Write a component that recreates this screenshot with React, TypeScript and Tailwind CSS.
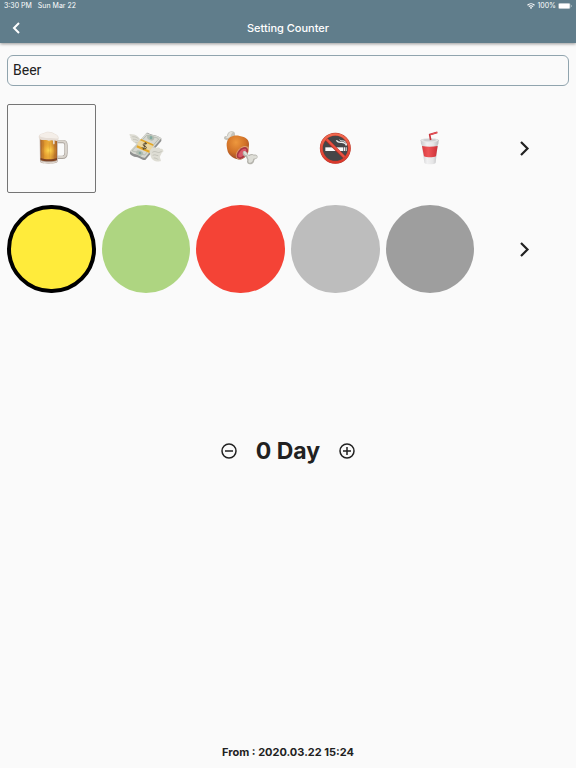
import { useState } from "react";
import type { ReactNode } from "react";

const BeerIcon = () => (
  <svg viewBox="-1 2 132 132" className="size-11" aria-hidden="true">
    <defs>
      <linearGradient id="beer" x1="0" x2="1">
        <stop offset="0" stopColor="#a9622a" />
        <stop offset=".25" stopColor="#df982f" />
        <stop offset=".55" stopColor="#eeb13d" />
        <stop offset="1" stopColor="#a86228" />
      </linearGradient>
      <radialGradient id="glow" cy=".55">
        <stop offset="0" stopColor="#ffdf55" />
        <stop offset="1" stopColor="#f0a52e" stopOpacity="0" />
      </radialGradient>
    </defs>
    <path d="M84 49h17c7 0 9 4 9 11v23c0 9-4 13-11 13H84" fill="none" stroke="#aaa39c" strokeWidth="10" />
    <path d="M84 48h17c7 0 9 4 9 11v23c0 9-4 13-11 13H84" fill="none" stroke="#d8d3cc" strokeWidth="6" />
    <path d="M31 36h54v72c0 5-8 7-27 7s-26-2-26-7z" fill="#b9aaa0" />
    <path d="M33 36h50v67c-5 5-45 5-49 0z" fill="url(#beer)" />
    <ellipse cx="59" cy="73" rx="24" ry="22" fill="url(#glow)" />
    <path d="M43 48v55M60 50v55M75 48v55" stroke="#a45f1d" strokeWidth="2" opacity=".3" />
    <path d="M34 98c12 5 37 5 49 0v6c-10 5-39 5-49 0z" fill="#7d4325" />
    <path d="M34 107c13 5 38 5 49 0v3c-12 5-38 5-49 0z" fill="#e5ddd4" />
    <path d="M29 39c-3-10 5-14 13-15 9-8 27-5 34 1 11 3 15 13 10 20-3 4-8 2-10 0v9c0 5-5 4-5-1v-7c-5-2-8 0-13 0-10-3-24 2-29-7z" fill="#e6ddd5" />
    <path d="M31 33c0-8 6-7 12-8 10-8 26-4 31 1 9 2 12 8 12 13-9 2-16-2-24-1-11 1-20-1-31-5z" fill="#f4eee8" />
  </svg>
);

const MoneyIcon = () => (
  <svg viewBox="14 17 132 132" className="size-11" aria-hidden="true">
    <path d="M66 65c-4-14-14-24-35-24-2 4 2 6 3 8-3 1-1 5 2 6-2 3 1 6 4 7 0 4 5 5 8 6 2 6 8 8 13 8z" fill="#dddcd3" />
    <path d="M39 49c9 0 14 2 19 7M41 57c7 0 12 2 16 5M48 67c5-1 8 0 11 2" fill="none" stroke="#b9b9b0" strokeWidth="2" />
    <path d="M32 94 81 39c4-5 10 4 18 4 11 1 19 5 27 11v8l-48 57c-10 1-15-7-28-9-8-1-12-3-18-9z" fill="#8f908f" />
    <path d="M32 92 79 40c6-4 11 4 20 4 11 1 18 4 27 10l-49 58c-10 2-15-7-28-10-7-1-11-4-17-10z" fill="#d6d7d0" />
    <path d="m38 91 44-46c8 2 15 5 23 6 5 0 9 2 13 5l-42 48c-9-1-14-7-23-9-5 0-11-2-15-4z" fill="none" stroke="#a5ada2" strokeWidth="2" />
    <ellipse cx="94" cy="52" rx="11" ry="8" fill="#b3bdb1" transform="rotate(25 94 52)" />
    <ellipse cx="95" cy="52" rx="4" ry="5" fill="#81aaa1" />
    <ellipse cx="61" cy="98" rx="11" ry="7" fill="#b3bdb1" transform="rotate(22 61 98)" />
    <ellipse cx="62" cy="98" rx="4" ry="4" fill="#85a7a0" />
    <path d="m65 56 37 16-4 17-8 9-38-16 3-15z" fill="#ead6a0" />
    <path d="m65 56 37 16v5L62 60zM54 75l37 16v7L51 81z" fill="#e3a628" />
    <path d="M83 71c-5-6-13-1-11 4 2 4 9 2 9 7 0 6-11 4-13-1m11-15-7 22" fill="none" stroke="#5a4a30" strokeWidth="3" />
    <path d="M92 91c5-10 13-12 20-8 5-3 10 0 12 3 5-2 9 3 8 8-7 3-5 7-9 12-4 6 4 12 1 17-17 2-28-4-30-17-1-6-5-10-2-15z" fill="#deddd4" />
    <path d="M99 96c7-5 12-1 16 0 4 2 8-1 12-3m-27 12c7-4 11 1 17 1m-14 7c6-1 9 3 14 4" fill="none" stroke="#b6b7ae" strokeWidth="2" />
  </svg>
);

const MeatIcon = () => (
  <svg viewBox="28 17 132 132" className="size-11" aria-hidden="true">
    <defs>
      <radialGradient id="meat" cx=".42" cy=".28" r=".8">
        <stop offset="0" stopColor="#ee983d" />
        <stop offset=".55" stopColor="#d07027" />
        <stop offset="1" stopColor="#873d27" />
      </radialGradient>
    </defs>
    <path d="M59 60c-8 0-16-2-16-8 0-4 5-6 9-5 0-8 6-15 14-14 10-1 12 9 9 15l-5 12z" fill="#c4c3bb" />
    <path d="M47 49c7 1 9-3 9-7 3-8 10-8 14-5-7 1-4 9-10 14-4 3-9 3-13-2z" fill="#e4e2db" />
    <path d="M52 65c4-16 21-22 38-18 18 3 28 11 28 24 0 9-2 16-4 24-4 16-15 25-30 22-16-4-29-15-31-29-2-9-3-17-1-23z" fill="url(#meat)" />
    <ellipse cx="98" cy="97" rx="15" ry="24" fill="#dca06c" transform="rotate(43 98 97)" />
    <ellipse cx="98" cy="98" rx="13" ry="21" fill="#a93642" transform="rotate(43 98 98)" />
    <ellipse cx="98" cy="98" rx="8" ry="16" fill="#d85a68" transform="rotate(43 98 98)" />
    <path d="M101 93c4-3 10 0 12 6l4 5c6-3 11-4 16-1 4-2 11 0 11 7-1 6-8 6-10 8 0 7-5 14-12 14-8 1-12-6-9-13l-4-9c-8-1-13-11-8-17z" fill="#b5b4ad" />
    <path d="M103 93c4-1 8 3 9 9l6 5c7-4 12-4 15-1 5-2 9 0 9 4 0 5-7 5-11 5-1 7-4 10-9 12-5 1-7-3-5-8l-5-14c-8-1-12-7-9-12z" fill="#deded7" />
  </svg>
);

const NoSmokingIcon = () => (
  <svg viewBox="9 17 132 132" className="size-11" aria-hidden="true">
    <defs>
      <linearGradient id="ring" x2="0" y2="1">
        <stop offset="0" stopColor="#f16a50" />
        <stop offset="1" stopColor="#d9382b" />
      </linearGradient>
    </defs>
    <circle cx="76" cy="84" r="44" fill="#464648" />
    <path d="M46 81h54v11H46z" fill="#fafafa" />
    <path d="M102 81h3v11h-3zM107 81h3v11h-3z" fill="#eee" />
    <path d="M79 60c5 7 9 6 15 6 8 0 13 1 15 10" fill="none" stroke="#f2f2f2" strokeWidth="4" />
    <path d="M89 58c4 5 8 3 12 4 6 1 9 5 9 12" fill="none" stroke="#f2f2f2" strokeWidth="3" />
    <path d="m46 54 60 60" stroke="#a72e25" strokeWidth="10" />
    <path d="m46 53 60 60" stroke="#ea5141" strokeWidth="7" />
    <circle cx="76" cy="84" r="42" fill="none" stroke="#b4362a" strokeWidth="9" />
    <circle cx="76" cy="84" r="42" fill="none" stroke="url(#ring)" strokeWidth="7" />
  </svg>
);

const CupIcon = () => (
  <svg viewBox="24 17 132 132" className="size-11" aria-hidden="true">
    <defs>
      <linearGradient id="cup">
        <stop offset="0" stopColor="#c9c9cb" />
        <stop offset=".35" stopColor="#f1f1f2" />
        <stop offset=".7" stopColor="#e5e5e6" />
        <stop offset="1" stopColor="#bababd" />
      </linearGradient>
      <linearGradient id="band">
        <stop offset="0" stopColor="#d93b40" />
        <stop offset=".4" stopColor="#ed5557" />
        <stop offset="1" stopColor="#cc3038" />
      </linearGradient>
    </defs>
    <path d="m64 65 9 62c2 6 32 6 34 0l7-62z" fill="url(#cup)" />
    <path d="M66 77c14 3 32 3 47 0l-5 31c-9 4-28 4-36 0z" fill="url(#band)" />
    <path d="M62 60c2-8 51-8 54 0l-1 12c-8 6-44 6-52 0z" fill="url(#cup)" />
    <ellipse cx="89" cy="60" rx="26" ry="6" fill="#e5e5e6" />
    <ellipse cx="89" cy="59" rx="20" ry="4" fill="#cfcfd1" />
    <path d="m92 59-3-16 23-7" fill="none" stroke="#c7333b" strokeWidth="5" strokeLinejoin="round" />
    <path d="m91 43 21-7" stroke="#ed555b" strokeWidth="3" />
  </svg>
);

const icons: { name: string; art: ReactNode }[] = [
  { name: "Beer", art: <BeerIcon /> },
  { name: "Money", art: <MoneyIcon /> },
  { name: "Meat", art: <MeatIcon /> },
  { name: "No smoking", art: <NoSmokingIcon /> },
  { name: "Soft drink", art: <CupIcon /> },
];

const colors = [
  { name: "Yellow", className: "bg-[#ffeb3b]" },
  { name: "Light green", className: "bg-[#aed581]" },
  { name: "Red", className: "bg-[#f44336]" },
  { name: "Light grey", className: "bg-[#bdbdbd]" },
  { name: "Grey", className: "bg-[#9e9e9e]" },
];

function NextButton({ label }: { label: string }) {
  return (
    <button type="button" aria-label={label} className="grid aspect-square place-items-center">
      <svg viewBox="0 0 24 24" className="size-6" fill="none" stroke="currentColor" strokeWidth="2.2" aria-hidden="true">
        <path d="m8 6 6.5 6.5L8 19" />
      </svg>
    </button>
  );
}

function StatusBar() {
  return (
    <div className="flex h-3 items-center justify-between px-1 text-[7px] leading-3">
      <div className="flex gap-1.5">
        <span>3:30 PM</span>
        <span>Sun Mar 22</span>
      </div>
      <div className="flex items-center gap-0.5">
        <svg viewBox="0 0 16 12" className="h-1.5 w-2" fill="none" stroke="currentColor" strokeWidth="2.2" aria-hidden="true">
          <path d="M1 4.5c4-4 10-4 14 0M3.7 7.4c2.5-2.3 6-2.3 8.6 0" />
          <path d="m8 12-2.4-2.5c1.4-1.2 3.4-1.2 4.8 0z" fill="currentColor" stroke="none" />
        </svg>
        <span>100%</span>
        <svg viewBox="0 0 28 12" className="h-1.5 w-3.5" aria-hidden="true">
          <rect x=".5" y=".5" width="24" height="11" rx="3" fill="none" stroke="currentColor" opacity=".5" />
          <rect x="1.5" y="1" width="22" height="10" rx="2" fill="currentColor" />
          <path d="M26 4c2 0 2 4 0 4z" fill="currentColor" opacity=".6" />
        </svg>
      </div>
    </div>
  );
}

export default function App() {
  const [name, setName] = useState("Beer");
  const [icon, setIcon] = useState(0);
  const [color, setColor] = useState(0);
  const [days, setDays] = useState(0);

  return (
    <div className="flex min-h-screen flex-col bg-[#fafafa] font-['Inter',sans-serif] text-[#212121]">
      <header className="bg-[#607d8b] text-white shadow-[0_1px_3px_rgba(0,0,0,0.4)]">
        <StatusBar />
        <div className="grid h-[31px] grid-cols-[32px_1fr_32px] items-center">
          <button type="button" aria-label="Back" className="grid h-full place-items-center">
            <svg viewBox="0 0 16 16" className="size-4" fill="none" stroke="currentColor" strokeWidth="2" aria-hidden="true">
              <path d="m11 3-5 5 5 5" />
            </svg>
          </button>
          <h1 className="text-center text-[11px] font-medium leading-4">Setting Counter</h1>
        </div>
      </header>

      <main className="flex flex-1 flex-col px-1 pt-3">
        <div className="px-[3px]">
          <input
            aria-label="Counter name"
            value={name}
            onChange={(event) => setName(event.target.value)}
            className="block h-[31px] w-full rounded-md border border-[#90a4ae] px-[5px] pb-0.5 font-['Roboto',sans-serif] text-[14px] outline-none"
          />
        </div>

        <div className="mt-[15px] grid grid-cols-6">
          {icons.map((item, index) => (
            <div key={item.name} className="p-[3px]">
              <button
                type="button"
                aria-label={item.name}
                aria-pressed={icon === index}
                onClick={() => setIcon(index)}
                className={`grid aspect-square w-full place-items-center rounded-xs border ${icon === index ? "border-[#757575]" : "border-transparent"}`}
              >
                {item.art}
              </button>
            </div>
          ))}
          <NextButton label="More icons" />
        </div>

        <div className="mt-1.5 grid grid-cols-6">
          {colors.map((item, index) => (
            <div key={item.name} className="p-[3px]">
              <button
                type="button"
                aria-label={item.name}
                aria-pressed={color === index}
                onClick={() => setColor(index)}
                className={`block aspect-square w-full rounded-full ${item.className} ${color === index ? "border-4 border-black" : ""}`}
              />
            </div>
          ))}
          <NextButton label="More colors" />
        </div>

        <div className="flex-1" />
        <div className="flex items-center justify-center gap-[18px]">
          <button type="button" aria-label="Decrease" onClick={() => setDays(Math.max(0, days - 1))}>
            <svg viewBox="0 0 18 18" className="size-[18px]" fill="none" stroke="currentColor" strokeWidth="1.5" aria-hidden="true">
              <circle cx="9" cy="9" r="7" />
              <path d="M5 9h8" />
            </svg>
          </button>
          <output className="text-[23px] font-bold leading-8">{days} Day</output>
          <button type="button" aria-label="Increase" onClick={() => setDays(days + 1)}>
            <svg viewBox="0 0 18 18" className="size-[18px]" fill="none" stroke="currentColor" strokeWidth="1.5" aria-hidden="true">
              <circle cx="9" cy="9" r="7" />
              <path d="M5 9h8M9 5v8" />
            </svg>
          </button>
        </div>
        <div className="flex-2" />
      </main>

      <footer className="pb-2 text-center text-[11px] font-bold leading-4">From : 2020.03.22 15:24</footer>
    </div>
  );
}
